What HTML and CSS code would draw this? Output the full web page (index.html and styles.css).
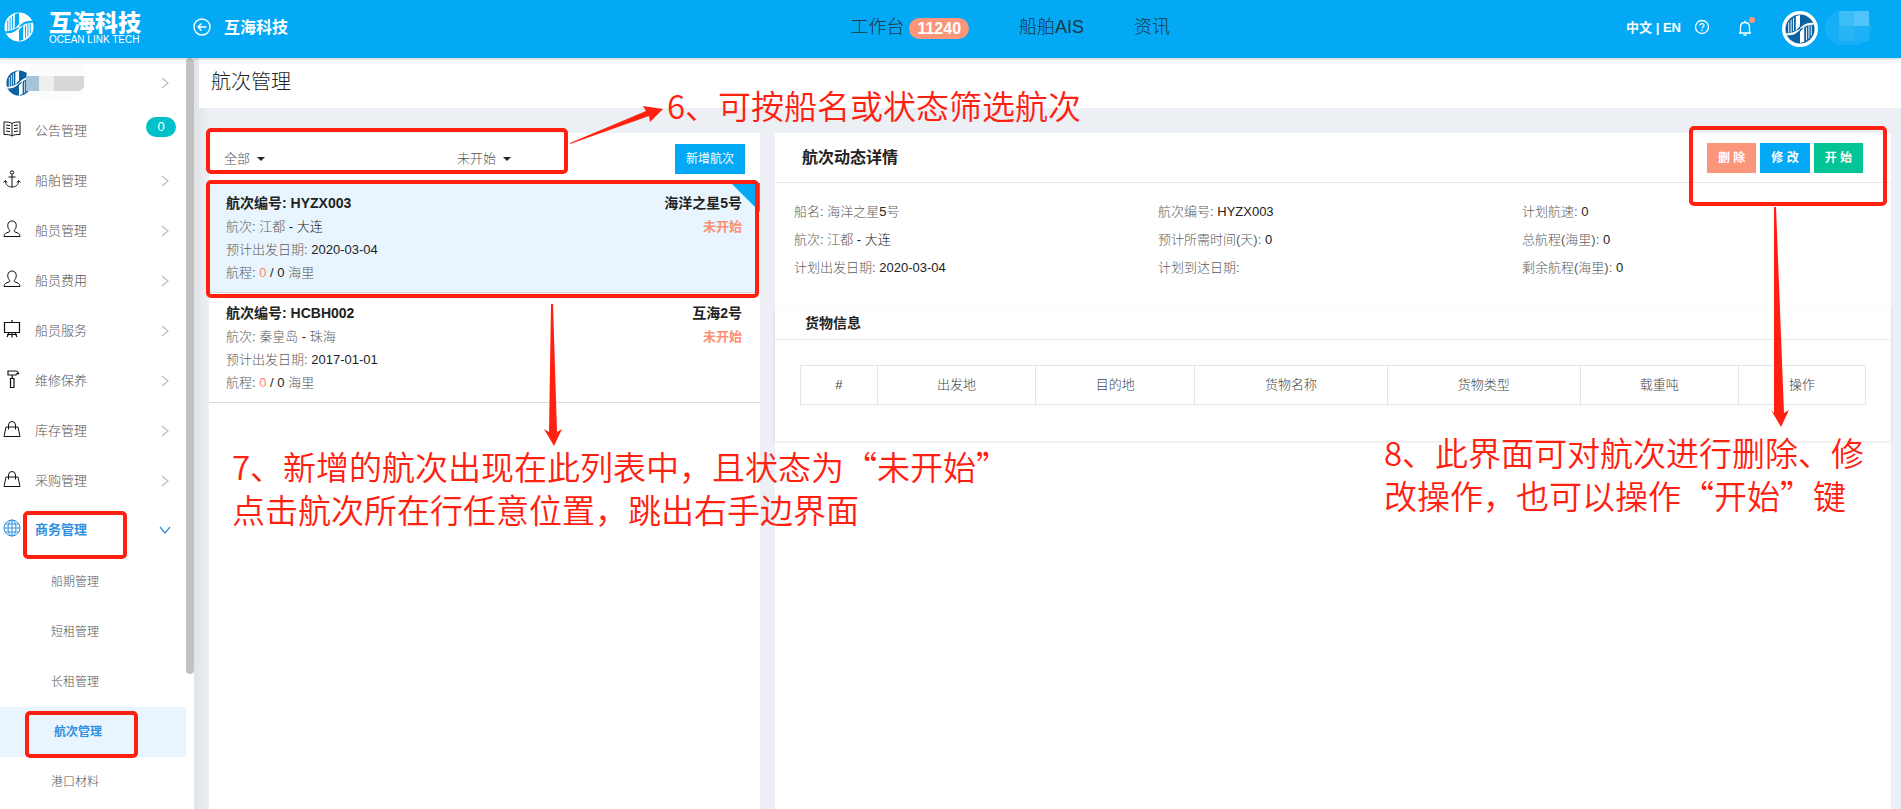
FILE: index.html
```html
<!DOCTYPE html>
<html lang="zh-CN">
<head>
<meta charset="utf-8">
<title>航次管理</title>
<link rel="stylesheet" href="styles.css">
</head>
<body>
<svg class="defs" aria-hidden="true">
  <symbol id="logo" viewBox="0 0 32 32">
    <circle cx="16" cy="16" r="15.5" fill="var(--disc)"/>
    <g fill="var(--cut)">
      <path d="M3.500 9h1v11h-1zM6 6h1v14H6zM8.500 4h1v14h-1zM11.500 2.500L16 1v12l-5 5.500Q7 21 1 20.500l1 2.200q6 .3 9-1.700l5-4v-1L11.500 18z"/>
    </g>
    <g fill="var(--cut)" transform="rotate(180 16 16)">
      <path d="M3.500 9h1v11h-1zM6 6h1v14H6zM8.500 4h1v14h-1zM11.500 2.500L16 1v12l-5 5.500Q7 21 1 20.500l1 2.200q6 .3 9-1.700l5-4v-1L11.500 18z"/>
    </g>
  </symbol>
  <symbol id="chevron" viewBox="0 0 8 12"><path d="M1 1l6 5-6 5" fill="none" stroke="currentColor" stroke-width="1.2"/></symbol>
  <symbol id="person" viewBox="0 0 18 18"><path d="M1 16.500h16c0-3-2-3.500-5-4.500-1-.5-1-1.500 0-2.500 2-2.500 2-8.500-3-8.500s-5 6-3 8.500c1 1 1 2 0 2.500-3 1-5 1.500-5 4.500z" fill="none" stroke="currentColor"/></symbol>
  <symbol id="bag" viewBox="0 0 18 18"><path d="M3 7h12l2 9.500H1zM5.500 9.500V5a3.500 3.500 0 0 1 7 0v4.500" fill="none" stroke="currentColor"/></symbol>
</svg>

<header class="topbar">
  <a class="brand" href="#">
    <svg class="brand-logo"><use href="#logo"/></svg>
    <span class="brand-text"><strong>互海科技</strong><small>OCEAN LINK TECH</small></span>
  </a>
  <a class="back" href="#">
    <svg class="back-icon" viewBox="0 0 18 18" fill="none" stroke="currentColor" stroke-width="1.400"><circle cx="9" cy="9" r="8"/><path d="M13.500 9H5M8.500 5.500L5 9l3.500 3.500"/></svg>
    互海科技
  </a>
  <nav class="topnav">
    <a href="#">工作台 <span class="count">11240</span></a>
    <a href="#">船舶AIS</a>
    <a href="#">资讯</a>
  </nav>
  <div class="tools">
    <a class="lang" href="#">中文 | EN</a>
    <svg class="help" viewBox="0 0 16 16" fill="none" stroke="currentColor" stroke-width="1.300"><circle cx="8" cy="8" r="6.500"/><path d="M6 6.500c0-2.600 4-2.600 4 0 0 1.500-2 1.400-2 3M8 10.700v1.300"/></svg>
    <svg class="bell" viewBox="0 0 24 24" fill="none" stroke="currentColor" stroke-width="1.300"><path d="M4 18h12M5.500 18v-6c0-6 9-6 9 0v6M8.500 20h3M10 7V5.500"/><circle cx="17" cy="5" r="3" fill="#fc967b" stroke="none"/></svg>
    <span class="avatar"><svg><use href="#logo"/></svg></span>
    <svg class="name-mask" viewBox="0 0 50 36"><rect width="46" height="34" rx="16" fill="#16aff6"/><path d="M14 0h15v15H14z" fill="#3bbdf8"/><path d="M29 0h15v15H29z" fill="#52c4f9"/><path d="M14 15h15v15H14z" fill="#27b5f6"/><path d="M29 15h15v15H29z" fill="#1eb1f6"/></svg>
  </div>
</header>

<div class="shell">
  <aside class="side">
    <nav class="menu">
      <a class="item user" href="#">
        <svg class="user-logo"><use href="#logo"/></svg>
        <svg class="user-mask" viewBox="0 0 62 44"><rect width="60" height="38" rx="18" fill="#fbfcfc"/><path d="M0 15h13v15H0z" fill="#a6c4d9"/><path d="M13 15h15v15H13z" fill="#f1efee"/><path d="M28 15h30v11l-4 4H28z" fill="#d9d6d9"/></svg>
        <svg class="chev"><use href="#chevron"/></svg>
      </a>
      <a class="item" href="#"><svg class="ico" viewBox="0 0 18 18" fill="none" stroke="currentColor"><path d="M9 3.500C7 2 4 2 1 2v12.500c3 0 6 0 8 1.500 2-1.500 5-1.500 8-1.500V2c-3 0-6 0-8 1.500zM9 3.500V16M3 5l4 .6M3 8l4 .6M3 11l4 .6M15 5l-4 .6M15 8l-4 .6M15 11l-4 .6"/></svg><span>公告管理</span><b class="pill">0</b></a>
      <a class="item" href="#"><svg class="ico" viewBox="0 0 18 18" fill="none" stroke="currentColor"><circle cx="9" cy="2.500" r="1.700"/><path d="M9 4.200V17M5.500 7h7M.5 12.500l2-2 1.500 2M17.500 12.500l-2-2-1.500 2M2.500 11c0 4 3 6 6.500 6s6.500-2 6.500-6"/></svg><span>船舶管理</span><svg class="chev"><use href="#chevron"/></svg></a>
      <a class="item" href="#"><svg class="ico"><use href="#person"/></svg><span>船员管理</span><svg class="chev"><use href="#chevron"/></svg></a>
      <a class="item" href="#"><svg class="ico"><use href="#person"/></svg><span>船员费用</span><svg class="chev"><use href="#chevron"/></svg></a>
      <a class="item" href="#"><svg class="ico" viewBox="0 0 18 18" fill="none" stroke="currentColor" stroke-width="1.200"><path d="M1.500 2.500h15v10h-15zM9 0v2.500M9 13v4.500M6 13l-2 4M12 13l2 4M4 14.500h10"/></svg><span>船员服务</span><svg class="chev"><use href="#chevron"/></svg></a>
      <a class="item" href="#"><svg class="ico" viewBox="0 0 18 18" fill="none" stroke="currentColor" stroke-width="1.200"><path d="M5 1h8c2 0 2 2 3 3-2-1-3 0-3 1H5zM7.500 8.500h3.500v9H7.500zM9.200 5v3.500"/></svg><span>维修保养</span><svg class="chev"><use href="#chevron"/></svg></a>
      <a class="item" href="#"><svg class="ico"><use href="#bag"/></svg><span>库存管理</span><svg class="chev"><use href="#chevron"/></svg></a>
      <a class="item" href="#"><svg class="ico"><use href="#bag"/></svg><span>采购管理</span><svg class="chev"><use href="#chevron"/></svg></a>
      <a class="item open" href="#"><svg class="ico" viewBox="0 0 18 18" fill="none" stroke="currentColor"><circle cx="9" cy="9" r="8"/><ellipse cx="9" cy="9" rx="4" ry="8"/><path d="M9 1v16M1 9h16M2.500 5h13M2.500 13h13"/></svg><span>商务管理</span><svg class="chev down"><use href="#chevron"/></svg></a>
      <a class="sub" href="#">船期管理</a>
      <a class="sub" href="#">短租管理</a>
      <a class="sub" href="#">长租管理</a>
      <a class="sub current" href="#">航次管理</a>
      <a class="sub" href="#">港口材料</a>
    </nav>
    <div class="scroll"></div>
  </aside>

  <main class="main">
    <h1 class="page-title">航次管理</h1>
    <div class="panels">
      <section class="list">
        <div class="filters">
          <label class="pick"><select aria-label="船名"><option>全部</option></select></label>
          <label class="pick"><select aria-label="状态"><option>未开始</option></select></label>
          <button class="btn blue" type="button">新增航次</button>
        </div>
        <article class="voyage selected">
          <div>
            <h3>航次编号: HYZX003</h3>
            <p><span>航次: 江都</span> - 大连</p>
            <p><span>预计出发日期:</span> 2020-03-04</p>
            <p><span>航程:</span> <em>0</em> / 0 <span>海里</span></p>
          </div>
          <div class="state"><h3>海洋之星5号</h3><strong>未开始</strong></div>
        </article>
        <article class="voyage">
          <div>
            <h3>航次编号: HCBH002</h3>
            <p><span>航次: 秦皇岛</span> - <span>珠海</span></p>
            <p><span>预计出发日期:</span> 2017-01-01</p>
            <p><span>航程:</span> <em>0</em> / 0 <span>海里</span></p>
          </div>
          <div class="state"><h3>互海2号</h3><strong>未开始</strong></div>
        </article>
      </section>

      <section class="detail">
        <div class="detail-head">
          <h2>航次动态详情</h2>
          <div class="actions">
            <button class="btn coral" type="button">删 除</button>
            <button class="btn blue" type="button">修 改</button>
            <button class="btn green" type="button">开 始</button>
          </div>
        </div>
        <div class="facts">
          <p><span>船名: 海洋之星</span>5<span>号</span></p>
          <p><span>航次编号:</span> HYZX003</p>
          <p><span>计划航速:</span> 0</p>
          <p><span>航次: 江都</span> - 大连</p>
          <p><span>预计所需时间(天):</span> 0</p>
          <p><span>总航程(海里):</span> 0</p>
          <p><span>计划出发日期:</span> 2020-03-04</p>
          <p><span>计划到达日期:</span></p>
          <p><span>剩余航程(海里):</span> 0</p>
        </div>
        <div class="cargo">
          <h3>货物信息</h3>
          <table>
            <colgroup><col class="c-no"><col class="c-port"><col class="c-port"><col class="c-goods"><col class="c-goods"><col class="c-port"><col></colgroup>
            <thead><tr><th>#</th><th>出发地</th><th>目的地</th><th>货物名称</th><th>货物类型</th><th>载重吨</th><th>操作</th></tr></thead>
          </table>
        </div>
      </section>
    </div>
  </main>
</div>

<div class="notes">
  <svg class="marks" width="1901" height="809">
    <g fill="none" stroke="#ff2010" stroke-width="4">
      <rect x="208" y="130" width="358" height="42" rx="3"/>
      <rect x="208" y="182" width="549" height="114" rx="3"/>
      <rect x="1691" y="128" width="194" height="76" rx="3"/>
      <rect x="25" y="513" width="100" height="44" rx="3"/>
      <rect x="27" y="713" width="109" height="43" rx="3"/>
    </g>
    <g fill="#ff2010">
      <path d="M570 143L646 111L643 106L663 109L650 122L649 116L570 144z"/>
      <path d="M551 304h2L557 432L562 429L554 446L544 429L549 432z"/>
      <path d="M1774 207h2L1784 413L1789 410L1781 427L1771 410L1774 413z"/>
    </g>
  </svg>
  <p class="note six">6、可按船名或状态筛选航次</p>
  <p class="note seven">7、新增的航次出现在此列表中，且状态为“未开始”<br>点击航次所在行任意位置，跳出右手边界面</p>
  <p class="note eight">8、此界面可对航次进行删除、修<br>改操作，也可以操作“开始”键</p>
</div>
</body>
</html>
```

FILE: styles.css
```css
* { box-sizing: border-box; }
body {
  --disc: #0b62a0;
  --cut: #fff;
  margin: 0;
  height: 100vh;
  overflow: hidden;
  display: flex;
  flex-direction: column;
  font: 300 13px/23px "Liberation Sans", "Noto Sans CJK SC", sans-serif;
  color: #222;
  background: #eceff4;
}
h1, h2, h3, p { margin: 0; }
a { color: inherit; text-decoration: none; }
button, select { font: inherit; color: inherit; }
.defs { position: absolute; width: 0; height: 0; }

.topbar {
  flex: none;
  position: relative;
  z-index: 1;
  height: 58px;
  display: flex;
  align-items: center;
  background: #03a9f5;
  color: #fff;
  box-shadow: 0 1px 3px rgba(0, 0, 0, .2);
}
.brand { display: flex; align-items: center; gap: 15px; width: 193px; padding: 0 0 4px 4px; }
.brand-logo { --disc: #fff; --cut: #03a9f5; width: 30px; height: 30px; }
.brand-text { display: flex; flex-direction: column; padding-top: 2px; }
.brand-text strong { font-size: 23px; line-height: 24px; font-weight: 900; }
.brand-text small { font-size: 10px; line-height: 10px; font-weight: 400; white-space: nowrap; }
.back { display: flex; align-items: center; gap: 13px; padding-bottom: 4px; font-size: 16px; font-weight: 700; }
.back-icon { width: 18px; height: 18px; }
.topnav { display: flex; gap: 50px; margin-left: auto; padding-bottom: 4px; font-size: 18px; color: #1f3644; }
.topnav a { display: flex; align-items: center; gap: 5px; }
.count { margin-top: 2px; padding: 0 8px; border-radius: 11px; background: #fc967b; color: #fff; font-size: 16px; line-height: 21px; font-weight: 700; }
.tools { display: flex; align-items: center; margin-left: 456px; padding-right: 26px; }
.lang { font-weight: 700; padding-bottom: 4px; }
.help { width: 16px; height: 16px; margin: 0 25px 4px 13px; }
.bell { width: 24px; height: 24px; margin: 0 23px 4px 0; }
.avatar { display: flex; padding: 3px; border-radius: 50%; background: #fff; }
.avatar svg { width: 30px; height: 30px; }
.name-mask { width: 50px; height: 36px; margin-left: 7px; }

.shell { flex: 1; min-height: 0; display: flex; }
.side { flex: none; width: 194px; display: flex; background: #fff; overflow: hidden; }
.menu { flex: 1; }
.scroll { width: 8px; height: 82%; border-radius: 4px; background: #c1c1c1; }
.item { height: 50px; display: flex; align-items: center; padding: 0 17px 3px 3px; color: #555; }
.item.user { height: 49px; padding-left: 6px; padding-bottom: 0; }
.user-logo { width: 26px; height: 26px; }
.user-mask { width: 62px; height: 44px; margin: 0 auto 0 -6px; }
.ico { width: 18px; height: 18px; margin: 0 14px 4px 0; color: #111; }
.item span { flex: 1; }
.chev { width: 8px; height: 12px; color: #bbb; }
.pill { min-width: 30px; margin: 0 -7px 8px 0; border-radius: 10px; background: #00c1ca; color: #fff; line-height: 20px; text-align: center; }
.item.open, .item.open .ico, .item.open .chev { color: #2f8fe0; }
.item.open span { font-weight: 700; }
.item.open { padding-bottom: 5px; }
.down { transform: rotate(90deg); }
.sub { display: block; padding-left: 51px; font-size: 12px; line-height: 50px; color: #555; }
.sub.current { padding-left: 54px; background: #e8f5ff; color: #2f8fe0; font-weight: 700; }

.main { flex: 1; min-width: 0; display: flex; flex-direction: column; padding-left: 5px; background: linear-gradient(to right, #e0e4e8, #eceff4 15px); }
.page-title { height: 50px; padding-left: 12px; background: #fff; font-size: 20px; line-height: 49px; font-weight: 300; color: #222; }
.panels { flex: 1; display: grid; grid-template-columns: 551fr 1116fr; gap: 15px; padding: 25px 10px 0; }
.list, .detail { background: #fff; min-width: 0; }
.filters { height: 50px; display: grid; grid-template-columns: 233px 1fr auto; align-items: center; padding: 1px 15px 0 15px; color: #555; }
.pick { display: flex; align-items: center; gap: 6px; }
.pick::after { content: ""; border: 4px solid transparent; border-top-color: #222; border-bottom: 0; }
.pick select { appearance: none; border: 0; padding: 0; background: none; font-weight: 300; }
.btn { height: 30px; border: 0; padding: 0 11px; font-size: 12px; line-height: 30px; font-weight: 400; color: #fff; }
.blue { background: #03a9f5; }
.coral { background: #fc967b; }
.green { background: #03c494; }
.voyage { position: relative; display: flex; justify-content: space-between; padding: 9px 18px 8px 17px; border-bottom: 1px solid #d9dadc; }
.voyage h3 { font-size: 14px; line-height: 23px; }
.voyage span, .facts span { color: #5c5c5c; }
.voyage em { font-style: normal; color: #fc8870; }
.state { text-align: right; }
.state strong { color: #fc8f75; font-weight: 700; }
.selected { background: #e8f5ff; }
.selected::after { content: ""; position: absolute; top: 0; right: 0; border: solid transparent; border-width: 0 0 29px 29px; border-right: 0; border-top: 29px solid #03a9f5; border-bottom: 0; }
.detail-head { height: 50px; display: flex; justify-content: space-between; align-items: center; padding: 0 28px 0 27px; border-bottom: 1px solid #e7e9eb; }
.detail-head h2 { font-size: 16px; }
.actions { display: flex; gap: 4px; }
.actions .btn { font-weight: 700; }
.facts { display: grid; grid-template-columns: repeat(3, 1fr); padding: 15px 5px 25px 19px; line-height: 28px; }
.cargo { height: 134px; box-shadow: 0 1px 3px rgba(0, 0, 0, .12); }
.cargo h3 { height: 33px; padding-left: 30px; border-bottom: 1px solid #e7e9eb; font-size: 14px; line-height: 33px; }
.cargo table { width: calc(100% - 50px); margin: 25px; table-layout: fixed; border-collapse: collapse; }
.cargo th { height: 39px; padding: 0 0 2px; border: 1px solid #e2e5e8; font-weight: 300; color: #444; }
.c-no { width: 7.2%; }
.c-port { width: 14.9%; }
.c-goods { width: 18.1%; }

.notes { position: absolute; inset: 0; z-index: 2; overflow: hidden; pointer-events: none; }
.marks { position: absolute; left: 0; top: 0; }
.note { position: absolute; white-space: nowrap; font: 350 33px/43px "Noto Sans CJK SC", sans-serif; color: #ff2010; }
.six { left: 667px; top: 84px; }
.seven { left: 232px; top: 445px; }
.eight { left: 1384px; top: 431px; }
```
